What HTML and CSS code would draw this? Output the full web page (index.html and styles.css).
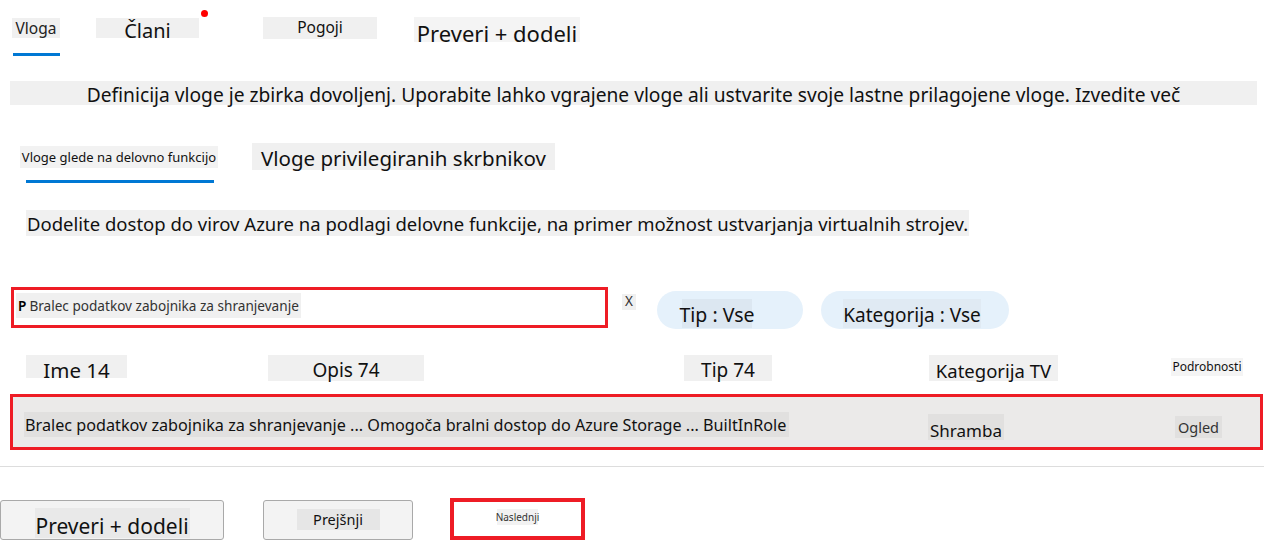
FILE: index.html
```html
<!DOCTYPE html>
<html lang="sl">
<head>
<meta charset="utf-8">
<title>Vloga</title>
<link rel="stylesheet" href="styles.css">
</head>
<body>
<div class="page">
  <nav class="tabs">
    <div class="tab tab-vloga">
      <span class="lbl lbl-vloga">Vloga</span>
      <span class="underline underline-vloga"></span>
    </div>
    <div class="tab tab-clani">
      <span class="lbl lbl-clani">Člani</span>
      <span class="dot"></span>
    </div>
    <div class="tab tab-pogoji">
      <span class="lbl lbl-pogoji">Pogoji</span>
    </div>
    <div class="tab tab-preveri">
      <span class="lbl lbl-preveri">Preveri + dodeli</span>
    </div>
  </nav>

  <p class="desc">Definicija vloge je zbirka dovoljenj. Uporabite lahko vgrajene vloge ali ustvarite svoje lastne prilagojene vloge. Izvedite več</p>

  <div class="subtabs">
    <div class="subtab subtab-job">
      <span class="lbl lbl-job">Vloge glede na delovno funkcijo</span>
      <span class="underline underline-job"></span>
    </div>
    <div class="subtab subtab-admin">
      <span class="lbl lbl-admin">Vloge privilegiranih skrbnikov</span>
    </div>
  </div>

  <p class="intro"><span class="lbl lbl-intro">Dodelite dostop do virov Azure na podlagi delovne funkcije, na primer možnost ustvarjanja virtualnih strojev.</span></p>

  <div class="filters">
    <div class="search">
      <span class="lbl lbl-search"><b class="search-p">P</b> Bralec podatkov zabojnika za shranjevanje</span>
    </div>
    <span class="lbl lbl-x">X</span>
    <div class="pill pill-tip"><span class="lbl pill-lbl pill-lbl-tip">Tip : Vse</span></div>
    <div class="pill pill-kat"><span class="lbl pill-lbl pill-lbl-kat">Kategorija : Vse</span></div>
  </div>

  <div class="thead">
    <span class="lbl th th-ime">Ime 14</span>
    <span class="lbl th th-opis">Opis 74</span>
    <span class="lbl th th-tip">Tip 74</span>
    <span class="lbl th th-kat">Kategorija TV</span>
    <span class="lbl th th-pod">Podrobnosti</span>
  </div>

  <div class="row">
    <span class="lbl td td-name">Bralec podatkov zabojnika za shranjevanje ... Omogoča bralni dostop do Azure Storage ... BuiltInRole</span>
    <span class="lbl td td-kat">Shramba</span>
    <span class="lbl td td-ogled">Ogled</span>
  </div>

  <hr class="sep">

  <div class="footer">
    <button class="btn btn-review"><span class="lbl btn-lbl-review">Preveri + dodeli</span></button>
    <button class="btn btn-prev"><span class="lbl btn-lbl-prev">Prejšnji</span></button>
    <button class="btn-next"><span class="lbl btn-lbl-next">Naslednji</span></button>
  </div>
</div>
</body>
</html>
```

FILE: styles.css
```css
* { box-sizing: border-box; }

html, body {
  margin: 0;
  padding: 0;
  background: #ffffff;
}

body {
  font-family: "Noto Sans", "Open Sans", sans-serif;
  color: #111111;
  width: 1264px;
  height: 541px;
  overflow: hidden;
}

.page {
  display: flex;
  flex-direction: column;
}

.lbl {
  display: inline-flex;
  align-items: center;
  justify-content: center;
  background: #f0f0f0;
  white-space: nowrap;
  line-height: 1;
}

/* top tabs */
.tabs {
  display: flex;
  align-items: flex-start;
  padding-top: 17px;
  height: 81px;
}

.tab {
  position: relative;
  display: flex;
  flex-direction: column;
}

.tab-vloga { margin-left: 12px; }
.tab-clani { margin-left: 36px; }
.tab-pogoji { margin-left: 64px; }
.tab-preveri { margin-left: 37px; }

.lbl-vloga {
  width: 48px;
  height: 20px;
  margin-top: 1px;
  font-size: 15.5px;
  padding-top: 1px;
  color: #222;
}

.underline {
  display: block;
  background: #0078d4;
  height: 3px;
}

.underline-vloga {
  width: 47px;
  margin-top: 15px;
  margin-left: 1px;
}

.lbl-clani {
  width: 103px;
  height: 20px;
  margin-top: 1px;
  font-size: 20px;
  padding-top: 5px;
}

.dot {
  position: absolute;
  left: 105px;
  top: -7px;
  width: 7px;
  height: 7px;
  border-radius: 50%;
  background: #ff0000;
}

.lbl-pogoji {
  width: 114px;
  height: 22px;
  font-size: 15.5px;
}

.lbl-preveri {
  width: 166px;
  height: 25px;
  font-size: 22px;
  padding-top: 6px;
  background: #f4f4f4;
}

/* description bar */
.desc {
  margin: 0 7px 0 10px;
  height: 24px;
  background: #f0f0f0;
  display: flex;
  align-items: center;
  justify-content: center;
  font-size: 19.2px;
  line-height: 1;
  padding-top: 3px;
  white-space: nowrap;
}

/* sub tabs */
.subtabs {
  display: flex;
  align-items: flex-start;
  margin-top: 38px;
  height: 40px;
}

.subtab {
  display: flex;
  flex-direction: column;
}

.subtab-job { margin-left: 20px; }
.subtab-admin { margin-left: 34px; }

.lbl-job {
  width: 198px;
  height: 22px;
  margin-top: 3px;
  font-size: 13px;
  background: #f2f2f2;
}

.underline-job {
  width: 188px;
  margin-top: 12px;
  margin-left: 6px;
}

.lbl-admin {
  width: 303px;
  height: 27px;
  font-size: 20.5px;
  padding-top: 4px;
}

/* intro */
.intro {
  margin: 27px 0 0 26px;
  height: 26px;
  display: flex;
}

.lbl-intro {
  height: 26px;
  padding: 3px 1px 0;
  font-size: 18.5px;
}

/* filters */
.filters {
  display: flex;
  align-items: flex-start;
  margin-top: 55px;
  height: 42px;
}

.search {
  margin-left: 11px;
  margin-top: -4px;
  width: 597px;
  height: 41px;
  border: 3px solid #ee1c25;
  padding: 3px 0 0 2px;
}

.lbl-search {
  height: 25px;
  width: 285px;
  justify-content: flex-start;
  font-size: 13.6px;
  color: #333;
  padding-left: 2px;
  padding-top: 1px;
}

.search-p {
  font-weight: 600;
  color: #000;
  margin-right: 3px;
}

.lbl-x {
  margin-left: 14px;
  margin-top: 3px;
  width: 14px;
  height: 16px;
  font-size: 13.5px;
  color: #333;
}

.pill {
  height: 38px;
  border-radius: 19px;
  background: #e5f1fb;
  display: flex;
  align-items: center;
}

.pill-tip {
  margin-left: 21px;
  width: 146px;
  padding-left: 25px;
}

.pill-kat {
  margin-left: 18px;
  width: 188px;
  padding-left: 22px;
}

.pill-lbl {
  background: #dce7f1;
  height: 29px;
  font-size: 19.5px;
  padding-top: 4px;
  margin-top: 6px;
}

.pill-lbl-tip { width: 70px; }
.pill-lbl-kat { width: 138px; background: #e0eaf3; font-size: 19px; }

/* table header */
.thead {
  display: grid;
  grid-template-columns: 242px 416px 245px 242px auto;
  align-items: start;
  margin-top: 22px;
  padding-left: 26px;
  height: 39px;
}

.th {
  height: 26px;
  font-size: 19px;
  padding-top: 4px;
}

.th-ime { width: 101px; height: 23px; font-size: 20.5px; padding-top: 7px; }
.th-opis { width: 156px; }
.th-tip { width: 88px; font-size: 19px; }
.th-kat { width: 129px; font-size: 18.5px; padding-top: 6px; }
.th-pod {
  width: 72px;
  height: 18px;
  margin-top: 3px;
  font-size: 12px;
  background: #f4f4f4;
  padding-top: 0;
}

/* data row */
.row {
  margin-left: 10px;
  width: 1253px;
  height: 56px;
  border: 3px solid #ee1c25;
  background: #ebeae9;
  display: grid;
  grid-template-columns: 904px 247px auto;
  align-items: start;
  padding: 15px 0 0 11px;
}

.td {
  background: #e1e0df;
  font-size: 15px;
}

.td-name {
  width: 765px;
  height: 25px;
  padding-top: 2px;
  padding-left: 1px;
  justify-content: flex-start;
  font-size: 16.2px;
}

.td-kat {
  width: 76px;
  height: 26px;
  margin-top: 2px;
  font-size: 17px;
  padding-top: 6px;
}

.td-ogled {
  width: 47px;
  height: 22px;
  margin-top: 4px;
  font-size: 14.5px;
  color: #333;
}

.sep {
  margin: 16px 0 0;
  border: 0;
  border-top: 1px solid #dddddd;
  height: 0;
}

/* footer */
.footer {
  display: flex;
  align-items: flex-start;
  margin-top: 31px;
}

.btn {
  font-family: inherit;
  background: #f3f3f3;
  border: 1px solid #a9a9a9;
  border-radius: 3px;
  height: 40px;
  padding: 0;
  margin-top: 2px;
  display: flex;
  align-items: center;
  justify-content: center;
  color: #111;
}

.btn-review {
  width: 224px;
}

.btn-lbl-review {
  width: 155px;
  height: 30px;
  margin-top: 6px;
  font-size: 21px;
  padding-top: 7px;
  background: #e9e9e9;
}

.btn-prev {
  margin-left: 39px;
  width: 150px;
  padding-bottom: 2px;
}

.btn-lbl-prev {
  width: 83px;
  height: 21px;
  font-size: 14.5px;
  background: #e6e6e6;
}

.btn-next {
  font-family: inherit;
  margin-left: 37px;
  width: 135px;
  height: 42px;
  border: 4px solid #ee1c25;
  background: #ffffff;
  padding: 0 0 4px;
  display: flex;
  align-items: center;
  justify-content: center;
}

.btn-lbl-next {
  width: 41px;
  height: 16px;
  font-size: 10px;
  color: #333;
  background: #f2f2f2;
}
```
